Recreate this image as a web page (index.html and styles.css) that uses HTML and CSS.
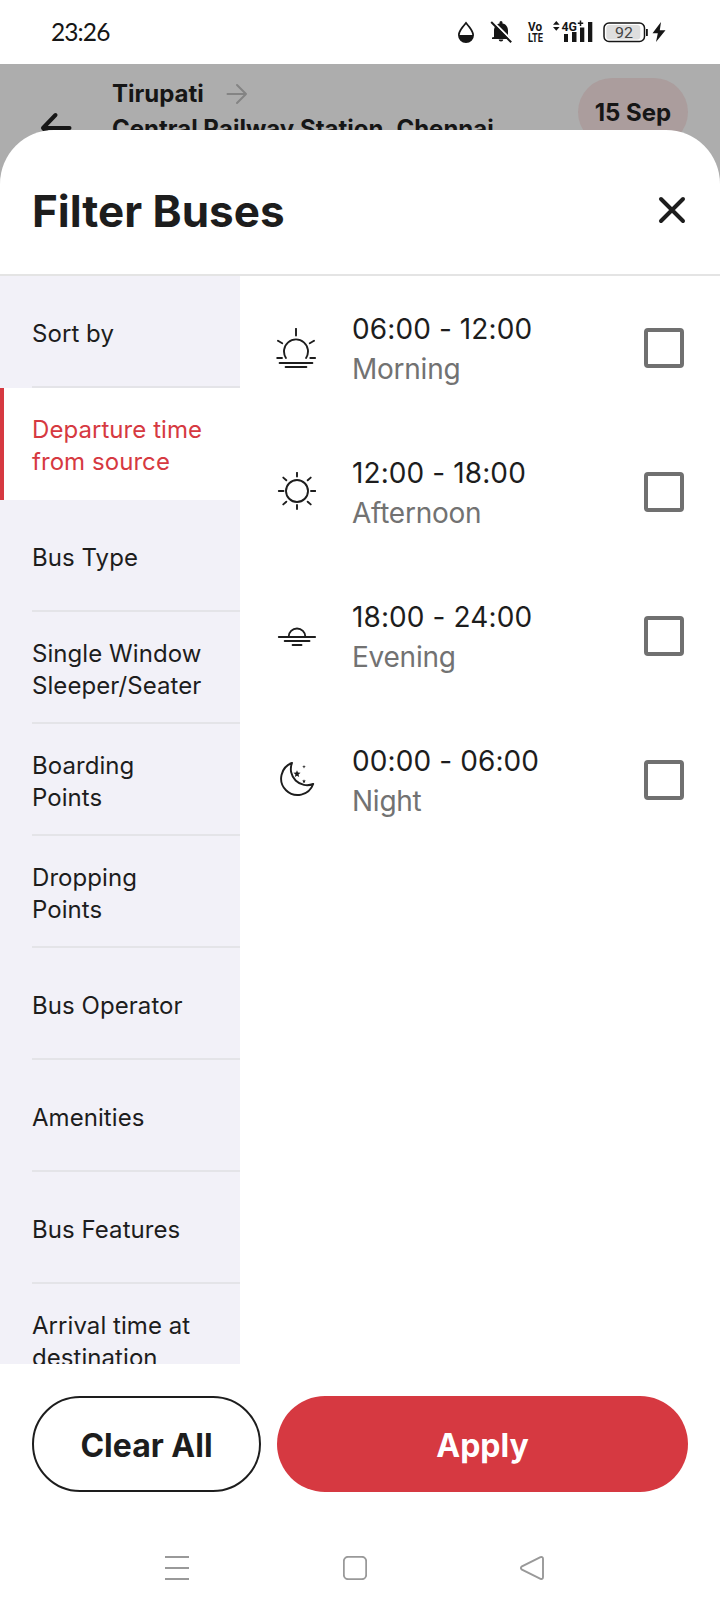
FILE: index.html
```html
<!DOCTYPE html>
<html lang="en">
<head>
<meta charset="utf-8">
<title>Filter Buses</title>
<link rel="stylesheet" href="styles.css">
</head>
<body>
<div class="screen">
  <div class="status">
    <span class="clock">23:26</span>
    <svg class="status-icons" width="216" height="32" viewBox="454 16 216 32" fill="#161616">
      <path d="M466 21.5C469.500 26 474 30.500 474 35A8 8 0 0 1 458 35C458 30.500 462.500 26 466 21.500Z" />
      <path d="M466 24.200C469 28 472.100 31.500 472.300 35H459.700C459.900 31.500 463 28 466 24.200Z" fill="#fff"/>
      <path d="M494 37V30.500C494 26.500 496.500 24 499.500 23.400V22.500a1.500 1.500 0 0 1 3 0v.9C506 24 508 27 508 30.500V35.500L510 37.500V39H492V37.500Z"/>
      <path d="M498.700 39.500h4.600a2.300 2 0 0 1-4.600 0Z"/>
      <path d="M493 21.500L513 41.500" stroke="#fff" stroke-width="2"/>
      <path d="M491.200 22L511.200 42.300" stroke="#161616" stroke-width="2"/>
      <text class="tiny" x="528" y="31" textLength="14" lengthAdjust="spacingAndGlyphs">Vo</text>
      <text class="tiny" x="528" y="41.500" textLength="15" lengthAdjust="spacingAndGlyphs">LTE</text>
      <path d="M553 24.800L556.300 21 559.600 24.800ZM553 27L556.300 30.800 559.600 27Z"/>
      <text class="net" x="561.500" y="31" textLength="15.500" lengthAdjust="spacingAndGlyphs">4G</text>
      <path d="M580.500 20.500v5.500M577.800 23.200h5.400" stroke="#161616" stroke-width="1.500"/>
      <path d="M564 34h4v8h-4ZM572 32h4.500V42H572ZM580 27.500h4.300V42H580ZM588 22h4.300v20H588Z"/>
      <rect x="604" y="23" width="40.500" height="18.500" rx="5" fill="#fff" stroke="#161616" stroke-width="1.500"/>
      <rect x="606.300" y="25" width="34" height="14.500" rx="3" fill="#dedede"/>
      <rect x="646" y="29" width="1.800" height="7"/>
      <text class="level" x="615" y="38.200" textLength="18" lengthAdjust="spacingAndGlyphs">92</text>
      <path d="M661 22L652.500 33.200H657.800L656 42L665.500 30.200H659.800Z"/>
    </svg>
  </div>

  <div class="backdrop">
    <svg class="back" width="32" height="34" viewBox="0 0 32 34" fill="none" stroke="#161616" stroke-width="4" stroke-linecap="round" stroke-linejoin="round"><path d="M29.500 17H3M15.500 4L3 17L15.500 30"/></svg>
    <div class="route">
      <div class="from">Tirupati
        <svg width="22" height="22" viewBox="0 0 22 22" fill="none" stroke="#848484" stroke-width="2" stroke-linecap="round" stroke-linejoin="round"><path d="M1.500 11H20M11 2L20 11L11 20"/></svg>
      </div>
      <div class="to">Central Railway Station, Chennai</div>
    </div>
    <div class="date">15 Sep</div>
  </div>

  <main class="sheet">
    <header class="head">
      <h1>Filter Buses</h1>
      <svg width="28" height="28" viewBox="0 0 28 28" stroke="#1d1d1d" stroke-width="4" stroke-linecap="round"><path d="M3 3L25 25M25 3L3 25"/></svg>
    </header>
    <div class="body">
      <nav class="tabs">
        <div class="tab"><span>Sort by</span></div>
        <div class="tab active"><span>Departure time from source</span></div>
        <div class="tab"><span>Bus Type</span></div>
        <div class="tab"><span>Single Window Sleeper/Seater</span></div>
        <div class="tab"><span>Boarding<br>Points</span></div>
        <div class="tab"><span>Dropping<br>Points</span></div>
        <div class="tab"><span>Bus Operator</span></div>
        <div class="tab"><span>Amenities</span></div>
        <div class="tab"><span>Bus Features</span></div>
        <div class="tab"><span>Arrival time at destination</span></div>
      </nav>
      <section class="options">
        <div class="option">
          <svg class="icon" viewBox="0 0 40 40"><path d="M20 .8V7.500M9.900 29.900A12 12 0 1 1 30.100 29.900M1.200 30H6M34.300 30H39.200M2 12.800L6.200 15.200M38 12.800L33.800 15.200M3.600 35H36.400M9.600 39H30.400"/></svg>
          <div class="label"><div>06:00 - 12:00</div><div class="sub">Morning</div></div>
          <span class="box"></span>
        </div>
        <div class="option">
          <svg class="icon" viewBox="0 0 40 40"><circle cx="21" cy="19" r="11"/><path d="M21 .8V4.500M21 33V37M2.800 19H7.500M35 19H39.400M7.300 5.600L10.300 8.300M34.700 5.600L31.700 8.300M7.300 32.400L10.300 29.700M34.700 32.400L31.700 29.700"/></svg>
          <div class="label"><div>12:00 - 18:00</div><div class="sub">Afternoon</div></div>
          <span class="box"></span>
        </div>
        <div class="option">
          <svg class="icon" viewBox="0 0 40 40"><path d="M12.700 20.500A8.300 8 0 0 1 29.300 20.500M2.800 21H39.200M8.700 25H33.500M16.600 29H25.500"/></svg>
          <div class="label"><div>18:00 - 24:00</div><div class="sub">Evening</div></div>
          <span class="box"></span>
        </div>
        <div class="option">
          <svg class="icon" viewBox="0 0 40 40"><path d="M16 3A16.500 16.500 0 1 0 37.200 24A16.200 16.200 0 0 1 16 3Z"/><path class="star" d="M21 10.200l.95 2.400 2.600.2-2 1.700.65 2.600L21 15.700l-2.200 1.400.65-2.600-2-1.700 2.600-.2ZM28 5l.5 1.200 1.300.5-1.300.5L28 8.400l-.5-1.200-1.300-.5 1.300-.5ZM28 19.200l.5 1.200 1.300.2-.9 1 .2 1.300-1.100-.7-1.100.7.2-1.300-.9-1 1.300-.2Z"/></svg>
          <div class="label"><div>00:00 - 06:00</div><div class="sub">Night</div></div>
          <span class="box"></span>
        </div>
      </section>
    </div>
    <footer class="actions">
      <button class="btn clear">Clear All</button>
      <button class="btn apply">Apply</button>
    </footer>
    <div class="sysnav">
      <svg width="24" height="24" viewBox="0 0 24 24"><path d="M0 1H24M0 12H24M0 23H24"/></svg>
      <svg width="24" height="24" viewBox="0 0 24 24"><rect x=".8" y=".8" width="22.400" height="22.400" rx="4.500"/></svg>
      <svg width="24" height="24" viewBox="0 0 24 24"><path d="M20.500 1.100L2 10.300Q-.2 12 2 13.700L20.500 22.900Q23 23.600 23 21V3Q23 .4 20.500 1.100Z"/></svg>
    </div>
  </main>
</div>
</body>
</html>
```
FILE: styles.css
```css
* { box-sizing: border-box; }
body { margin: 0; background: #fff; color: #1d1d1d; font-family: Inter, "Liberation Sans", sans-serif; }
.screen { width: 720px; height: 1612px; overflow: hidden; display: flex; flex-direction: column; }

.status { flex: none; height: 64px; padding: 0 50px 0 51px; display: flex; align-items: center; justify-content: space-between; }
.clock { font-family: Lato, sans-serif; font-size: 24.5px; line-height: 32px; letter-spacing: -.9px; color: #161616; }
.tiny { font: 700 12.5px Roboto, sans-serif; }
.net { font: 700 13.5px Roboto, sans-serif; }
.level { font: 400 15.5px Roboto, sans-serif; fill: #444; }

.backdrop { flex: none; height: 120px; margin-bottom: -54px; padding: 14px 32px 0 40px; background: #adadad; color: #161616; display: flex; align-items: flex-start; }
.back { margin-top: 33px; }
.route { flex: 1; margin: -2px 0 0 40px; font-size: 24px; font-weight: 700; line-height: 35px; white-space: nowrap; }
.from { display: flex; align-items: center; gap: 22px; }
.date { width: 110px; height: 68px; padding-top: 1px; border-radius: 34px; background: #ab9d9d; font-size: 24px; font-weight: 700; line-height: 68px; text-align: center; }

.sheet { flex: 1; min-height: 0; position: relative; background: #fff; border-radius: 54px 54px 0 0; display: flex; flex-direction: column; }
.head { flex: none; height: 146px; padding: 16px 34px 0 32px; border-bottom: 2px solid #e4e4e4; display: flex; align-items: center; justify-content: space-between; }
.head h1 { margin: 2px 0 0; font-size: 44px; line-height: 56px; font-weight: 700; }
.body { flex: none; height: 1088px; overflow: hidden; display: flex; }
.tabs { flex: none; width: 240px; background: #f2f1f8; font-size: 24px; line-height: 32px; letter-spacing: .06px; }
.tab { height: 112px; padding-left: 32px; }
.tab span { height: 112px; padding: 6px 20px 0 0; border-bottom: 2px solid #e4e4e8; display: flex; align-items: center; }
.tab.active { background: #fff; color: #d63941; border-left: 4px solid #d63941; padding-left: 28px; }
.tab.active span { border-color: transparent; }
.options { flex: 1; }
.option { height: 144px; padding: 0 36px; display: flex; align-items: center; }
.icon { width: 40px; height: 40px; fill: none; stroke: #1d1d1d; stroke-width: 1.900; stroke-linecap: round; stroke-linejoin: round; }
.icon .star { fill: #1d1d1d; stroke: none; }
.label { flex: 1; margin-left: 36px; padding-top: 2px; font-size: 28px; line-height: 40px; letter-spacing: .1px; }
.sub { color: #727272; letter-spacing: -.25px; }
.box { width: 40px; height: 40px; border: 4px solid #707070; border-radius: 4px; }
.actions { flex: none; padding: 32px 32px 0; display: flex; gap: 16px; }
.btn { height: 96px; padding: 2px 0 0; border: 0; border-radius: 48px; font: 700 32px Inter, sans-serif; }
.clear { width: 229px; background: #fff; color: #1d1d1d; border: 2px solid #1d1d1d; }
.apply { flex: 1; background: #d63941; color: #fff; }
.sysnav { padding: 64px 176px 0 165px; display: flex; justify-content: space-between; }
.sysnav svg { fill: none; stroke: #999; stroke-width: 1.900; }
```
